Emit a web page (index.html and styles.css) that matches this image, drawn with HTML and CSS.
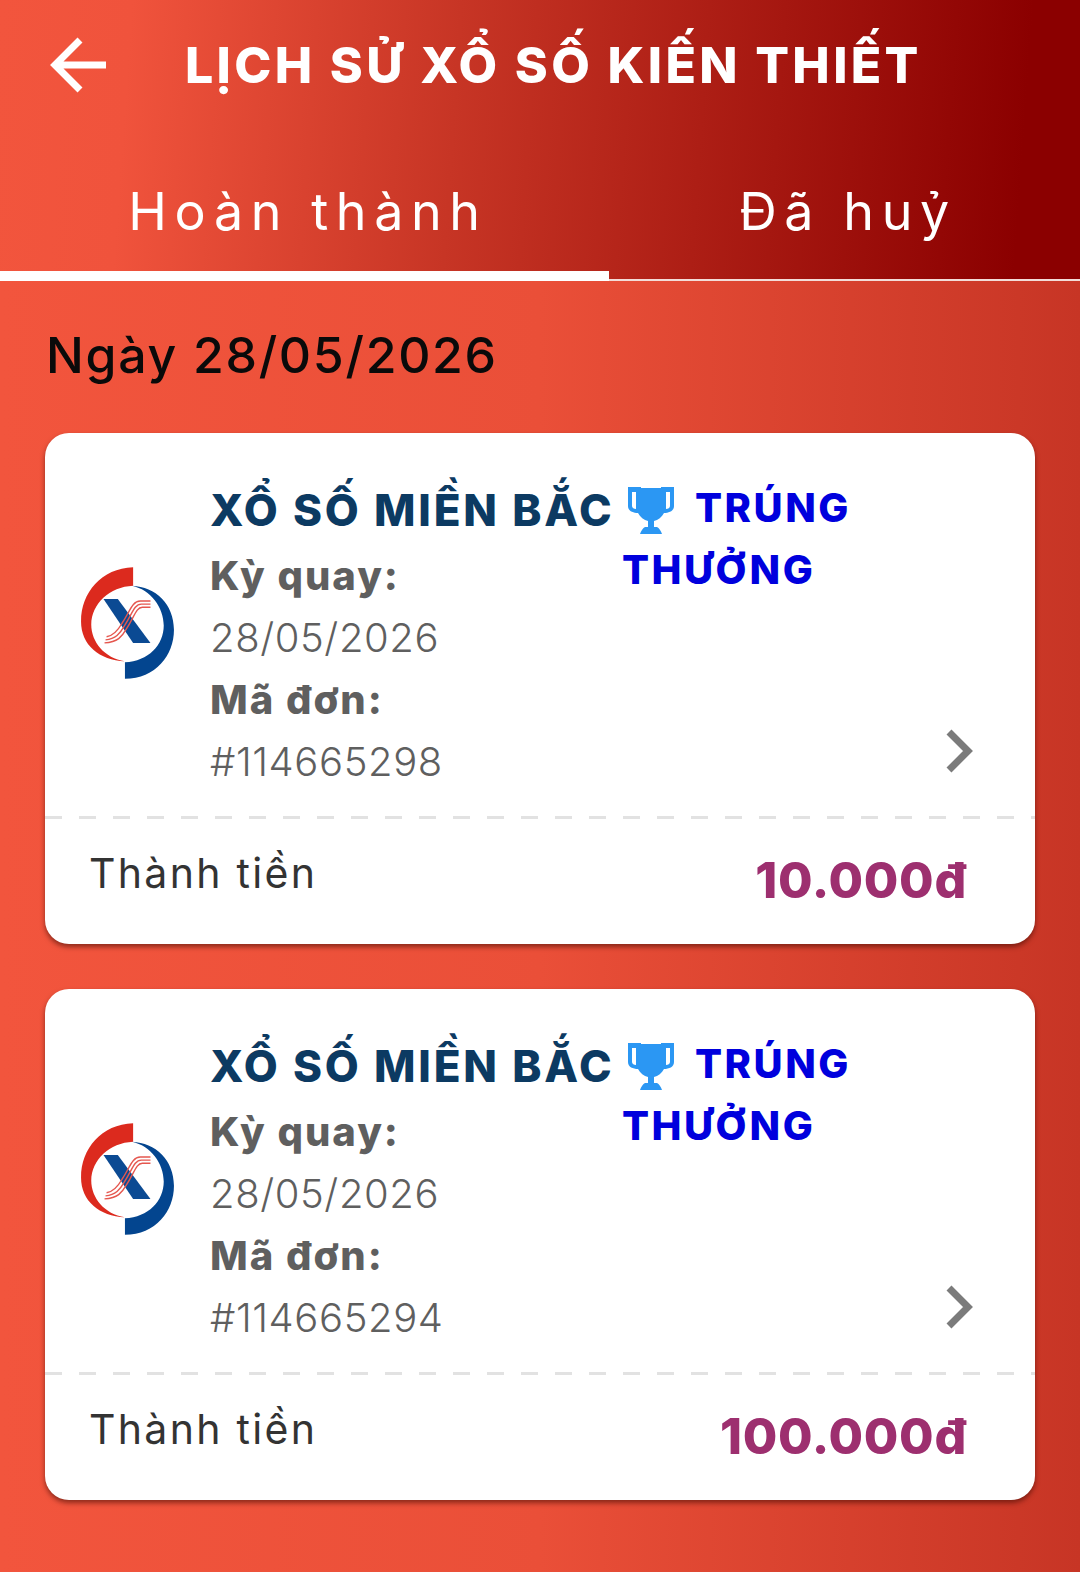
FILE: index.html
```html
<!DOCTYPE html>
<html lang="vi">
<head>
    <meta charset="UTF-8">
    <meta name="viewport" content="width=device-width, initial-scale=1.0">
    <title>Lịch sử xổ số kiến thiết</title>
    <link rel="stylesheet" href="styles.css">
</head>
<body>

    <svg class="defs" width="0" height="0" aria-hidden="true">
        <symbol id="logo" viewBox="20 17 95 113">
            <path d="M73 19 C42 20 22 44 22 72 C22 95 40 110 65 111 C45 108 32 92 32 75 C32 55 50 38 73 37 Z" fill="#dc2a1e"/>
            <path d="M65 128 C95 128 113 105 113 80 C113 55 95 38 72 37 C90 41 103 58 103 76 C103 95 88 111 65 112 Z" fill="#03458f"/>
            <path d="M44 50 H58 L90 93 H73 Z" fill="#0b4a93"/>
            <path d="M90 52 H80 C72 52 70 62 62 74 C58 81 54 86 47 87 M90 55 H81 C74 55 72 65 64 77 C60 84 56 89 46 90 M90 58 H82 C76 58 74 68 66 80 C62 87 58 92 45 93" fill="none" stroke="#e5574f" stroke-width="1.4"/>
        </symbol>
        <symbol id="trophy" viewBox="0 0 48 48">
            <path fill-rule="evenodd" d="M1 0 H14 V1 H34 V0 H47 V19 C47 24 42 26 37 26 C35 30 31 33 27 34 V40 H30 C32 41 34 44 35 47 H13 C14 44 16 41 18 40 H21 V34 C17 33 13 30 11 26 C6 26 1 24 1 19 Z M5 5 V19 C5 21 7 22 9 22 V5 Z M39 5 V22 C41 22 43 21 43 19 V5 Z" fill="#2b97f3"/>
        </symbol>
    </svg>

    <header class="top">
        <div class="title-row">
            <svg class="back" viewBox="0 0 56 56" width="56" height="56">
                <path d="M56 28 H5 M30 3 L5 28 L30 53" fill="none" stroke="#fff" stroke-width="7"/>
            </svg>
            <h1>LỊCH SỬ XỔ SỐ KIẾN THIẾT</h1>
        </div>
        <nav class="tabs">
            <a class="tab active">Hoàn thành</a>
            <a class="tab">Đã huỷ</a>
        </nav>
    </header>

    <main class="content">
        <h2>Ngày 28/05/2026</h2>

        <section class="card">
            <div class="card-body">
                <svg class="logo"><use href="#logo"/></svg>
                <div class="info">
                    <div class="name">XỔ SỐ MIỀN BẮC</div>
                    <div class="label">Kỳ quay:</div>
                    <div class="value">28/05/2026</div>
                    <div class="label">Mã đơn:</div>
                    <div class="value">#114665298</div>
                </div>
                <div class="status">
                    <svg class="trophy"><use href="#trophy"/></svg>TRÚNG THƯỞNG
                </div>
                <svg class="chevron" viewBox="0 0 28 44" width="28" height="44">
                    <path d="M3 3 L22 22 L3 41" fill="none" stroke="#7b7b7b" stroke-width="7"/>
                </svg>
            </div>
            <div class="card-foot">
                <span class="total-label">Thành tiền</span>
                <span class="total">10.000đ</span>
            </div>
        </section>

        <section class="card">
            <div class="card-body">
                <svg class="logo"><use href="#logo"/></svg>
                <div class="info">
                    <div class="name">XỔ SỐ MIỀN BẮC</div>
                    <div class="label">Kỳ quay:</div>
                    <div class="value">28/05/2026</div>
                    <div class="label">Mã đơn:</div>
                    <div class="value">#114665294</div>
                </div>
                <div class="status">
                    <svg class="trophy"><use href="#trophy"/></svg>TRÚNG THƯỞNG
                </div>
                <svg class="chevron" viewBox="0 0 28 44" width="28" height="44">
                    <path d="M3 3 L22 22 L3 41" fill="none" stroke="#7b7b7b" stroke-width="7"/>
                </svg>
            </div>
            <div class="card-foot">
                <span class="total-label">Thành tiền</span>
                <span class="total">100.000đ</span>
            </div>
        </section>
    </main>

</body>
</html>
```

FILE: styles.css
```css
html, body {
    height: 100%;
}
body {
    margin: 0;
    font-family: Inter, "Noto Sans", sans-serif;
    background: linear-gradient(90deg, #f2553d 0%, #ea4f38 50%, #c73525 100%);
    overflow: hidden;
}
.defs {
    position: absolute;
}
.top {
    height: 281px;
    box-sizing: border-box;
    background: linear-gradient(94deg, #f2553d 0%, #f0533c 12%, #c73525 42%, #8b0000 94%);
}
.title-row {
    height: 129px;
    display: flex;
    align-items: center;
    padding-left: 50px;
}
.back {
    margin-right: 79px;
}
h1 {
    margin: 0;
    color: #fff;
    font-size: 50px;
    font-weight: 800;
    letter-spacing: 3.35px;
    white-space: nowrap;
}
.tabs {
    height: 152px;
    display: flex;
    border-bottom: 2px solid #f3dcd8;
    box-sizing: border-box;
}
.tab {
    color: #fff;
    font-size: 52px;
    font-weight: 400;
    letter-spacing: 7.6px;
    display: flex;
    justify-content: center;
    padding: 51px 0 0 7px;
    box-sizing: border-box;
    height: 152px;
}
.tab:first-child {
    width: 609px;
}
.tab:last-child {
    width: 471px;
}
.tab.active {
    border-bottom: 10px solid #fff;
}
.content {
    padding: 0 45px;
}
h2 {
    margin: 0;
    height: 152px;
    box-sizing: border-box;
    padding: 44px 0 0 1px;
    font-size: 50px;
    line-height: 60px;
    font-weight: 500;
    letter-spacing: 1.7px;
    color: #0a0a0a;
}
.card {
    height: 511px;
    background: #fff;
    border-radius: 24px;
    box-shadow: 0 3px 5px rgba(60, 10, 0, 0.55);
    margin-bottom: 45px;
    overflow: hidden;
}
.card-body {
    height: 386px;
    display: flex;
    position: relative;
    background: repeating-linear-gradient(90deg, #e2e2e2 0 17px, transparent 17px 34px) left bottom / 100% 3px no-repeat;
}
.logo {
    width: 97px;
    height: 116px;
    margin: 0 34px 6px 34px;
    align-self: center;
}
.info {
    width: 412px;
    padding-top: 46px;
    flex: none;
}
.name {
    color: #0c3a62;
    font-size: 44px;
    font-weight: 800;
    letter-spacing: 2.8px;
    line-height: 62px;
    margin-bottom: 4px;
    white-space: nowrap;
}
.label {
    color: #5f5f5f;
    font-size: 40px;
    font-weight: 800;
    letter-spacing: 2px;
    line-height: 62px;
}
.value {
    color: #5f5f5f;
    font-size: 40px;
    font-weight: 300;
    letter-spacing: 0.6px;
    line-height: 62px;
}
.status {
    width: 250px;
    padding-top: 44px;
    color: #0000dd;
    font-size: 40px;
    font-weight: 800;
    letter-spacing: 2.5px;
    line-height: 62px;
}
.trophy {
    width: 48px;
    height: 48px;
    margin: 0 20px 0 5px;
    vertical-align: -13px;
}
.chevron {
    position: absolute;
    left: 901px;
    top: 296px;
}
.card-foot {
    height: 125px;
    display: flex;
    justify-content: space-between;
    padding: 0 68px 0 44px;
}
.total-label {
    color: #333;
    font-size: 41px;
    letter-spacing: 2.3px;
    line-height: 108px;
}
.total {
    color: #9d2f6f;
    font-size: 50px;
    font-weight: 800;
    letter-spacing: 0.7px;
    line-height: 122px;
}
```
